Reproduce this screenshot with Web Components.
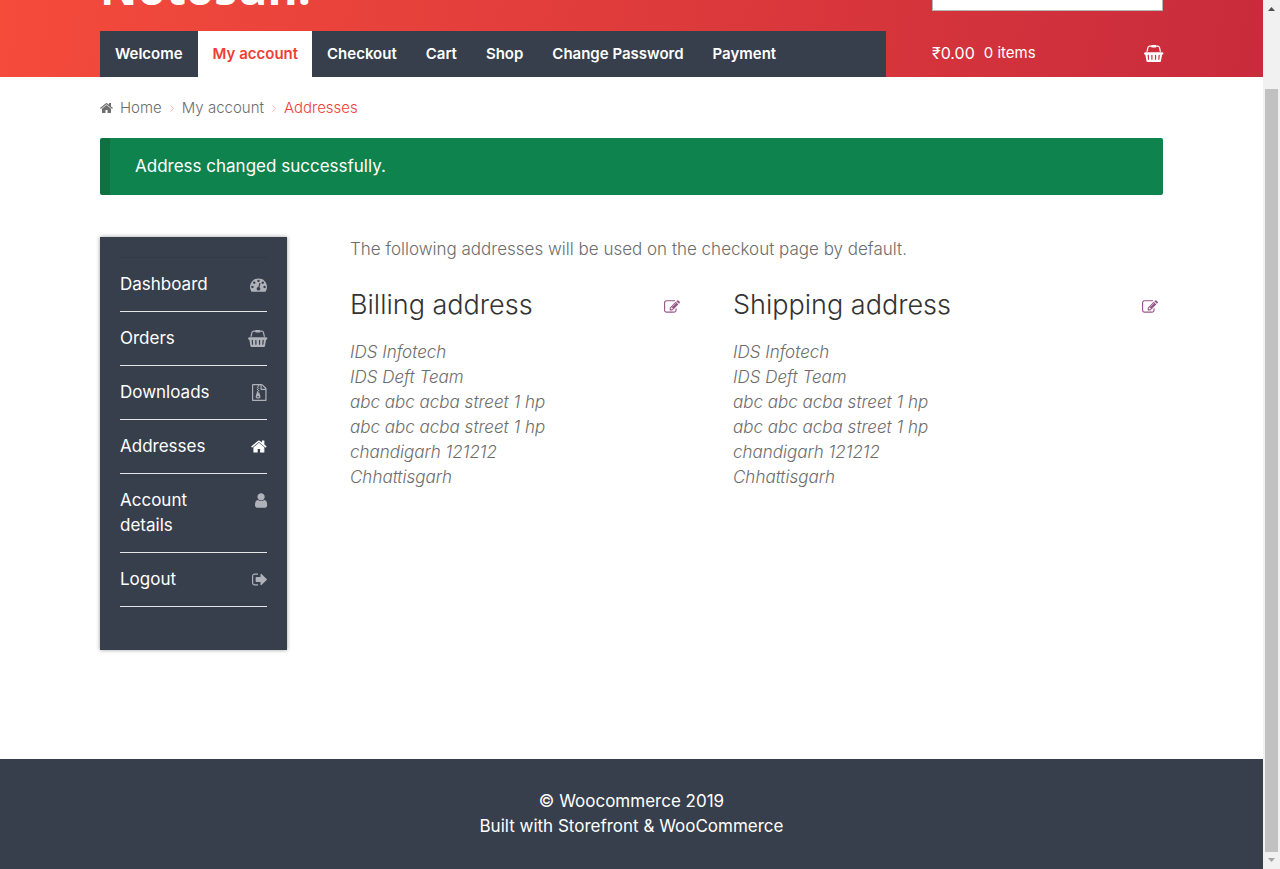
<!DOCTYPE html>
<html lang="en">
<head>
<meta charset="utf-8">
<meta name="viewport" content="width=device-width, initial-scale=1">
<title>Addresses – Woocommerce</title>
<style>
  html, body { margin: 0; height: 100%; }
  body {
    --slate: #373f4d;
    --red: #ef3e36;
    --wrap: 1063px;
    background: #fff;
    color: #6d6d6d;
    font: 300 17px/25px Inter, "Open Sans", sans-serif;
    overflow: hidden;
  }
</style>
</head>
<body>
<shop-page>
  <site-header slot="header"></site-header>
  <crumb-trail></crumb-trail>
  <notice-bar>Address changed successfully.</notice-bar>
  <account-layout>
    <account-nav slot="nav">
      <account-link icon="gauge">Dashboard</account-link>
      <account-link icon="basket">Orders</account-link>
      <account-link icon="archive">Downloads</account-link>
      <account-link icon="home" current>Addresses</account-link>
      <account-link icon="user">Account details</account-link>
      <account-link icon="exit">Logout</account-link>
    </account-nav>
    <address-card heading="Billing address">IDS Infotech<br>IDS Deft Team<br>abc abc acba street 1 hp<br>abc abc acba street 1 hp<br>chandigarh 121212<br>Chhattisgarh</address-card>
    <address-card heading="Shipping address">IDS Infotech<br>IDS Deft Team<br>abc abc acba street 1 hp<br>abc abc acba street 1 hp<br>chandigarh 121212<br>Chhattisgarh</address-card>
  </account-layout>
  <site-footer slot="footer"></site-footer>
</shop-page>

<script>
/* Each icon: left edge of its box, width of its box, path. */
const ICONS = {
  home: [64, 1664, "M1472 992v480q0 26-19 45t-45 19h-384v-384h-256v384h-384q-26 0-45-19t-19-45v-480q0-1 .5-3t.5-3l575-474 575 474q1 2 1 6zm223-69l-62 74q-8 9-21 11h-3q-13 0-21-7l-692-577-692 577q-12 8-24 7-13-2-21-11l-62-74q-8-10-7-23.5t11-21.5l719-599q32-26 76-26t76 26l244 204v-195q0-14 9-23t23-9h192q14 0 23 9t9 23v408l219 182q10 8 11 21.5t-7 23.5z"],
  user: [256, 1280, "M1536 1399q0 109-62.5 187t-150.5 78h-854q-88 0-150.5-78t-62.5-187q0-85 8.5-160.5t31.5-152 58.5-131 94-89 134.5-34.5q131 128 313 128t313-128q76 0 134.5 34.5t94 89 58.5 131 31.5 152 8.5 160.5zm-256-887q0 159-112.5 271.5t-271.5 112.5-271.5-112.5-112.5-271.5 112.5-271.5 271.5-112.5 271.5 112.5 112.5 271.5z"],
  exit: [64, 1600, "M704 1440q0 4 1 20t.5 26.5-3 23.5-10 19.5-20.5 6.5h-320q-119 0-203.5-84.5t-84.5-203.5v-704q0-119 84.5-203.5t203.5-84.5h320q13 0 22.5 9.5t9.5 22.5q0 4 1 20t.5 26.5-3 23.5-10 19.5-20.5 6.5h-320q-66 0-113 47t-47 113v704q0 66 47 113t113 47h312l11.5 1 11.5 3 8 5.5 7 9 2 13.5zm928-544q0 26-19 45l-544 544q-19 19-45 19t-45-19-19-45v-288h-448q-26 0-45-19t-19-45v-384q0-26 19-45t45-19h448v-288q0-26 19-45t45-19 45 19l544 544q19 19 19 45z"],
  edit: [0, 1792, "M888 1184l116-116-152-152-116 116v56h96v96h56zm440-720q-16-16-33 1l-350 350q-17 17-1 33t33-1l350-350q17-17 1-33zm80 594v190q0 119-84.5 203.5t-203.5 84.5h-832q-119 0-203.5-84.5t-84.5-203.5v-832q0-119 84.5-203.5t203.5-84.5h832q63 0 117 25 15 7 18 23 3 17-9 29l-49 49q-14 14-32 8-23-6-45-6h-832q-66 0-113 47t-47 113v832q0 66 47 113t113 47h832q66 0 113-47t47-113v-126q0-13 9-22l64-64q15-15 35-7t20 29zm-96-738l288 288-672 672h-288v-288zm444 132l-92 92-288-288 92-92q28-28 68-28t68 28l152 152q28 28 28 68t-28 68z"],
  gauge: [0, 1792, "M384 1152q0-53-37.5-90.5t-90.5-37.5-90.5 37.5-37.5 90.5 37.5 90.5 90.5 37.5 90.5-37.5 37.5-90.5zm192-448q0-53-37.5-90.5t-90.5-37.5-90.5 37.5-37.5 90.5 37.5 90.5 90.5 37.5 90.5-37.5 37.5-90.5zm428 481l101-382q6-26-7.5-48.5t-38.5-29.5-48 6.5-30 39.5l-101 382q-60 5-107 43.5t-63 98.5q-20 77 20 146t117 89 146-20 89-117q16-60-6-117t-72-91zm660-33q0-53-37.5-90.5t-90.5-37.5-90.5 37.5-37.5 90.5 37.5 90.5 90.5 37.5 90.5-37.5 37.5-90.5zm-640-640q0-53-37.5-90.5t-90.5-37.5-90.5 37.5-37.5 90.5 37.5 90.5 90.5 37.5 90.5-37.5 37.5-90.5zm448 192q0-53-37.5-90.5t-90.5-37.5-90.5 37.5-37.5 90.5 37.5 90.5 90.5 37.5 90.5-37.5 37.5-90.5zm320 448q0 261-141 483-19 29-54 29h-1402q-35 0-54-29-141-221-141-483 0-182 71-348t191-286 286-191 348-71 348 71 286 191 191 286 71 348z"],
  basket: [0, 2048, "M1920 768q53 0 90.5 37.5t37.5 90.5-37.5 90.5-90.5 37.5h-15l-115 662q-8 46-44 76t-82 30h-1280q-46 0-82-30t-44-76l-115-662h-15q-53 0-90.5-37.5t-37.5-90.5 37.5-90.5 90.5-37.5h1792zm-1435 800q26-2 43.5-22.5t15.5-46.5l-32-416q-2-26-22.5-43.5t-46.5-15.5-43.5 22.5-15.5 46.5l32 416q2 25 20.5 42t43.5 17h5zm411-64v-416q0-26-19-45t-45-19-45 19-19 45v416q0 26 19 45t45 19 45-19 19-45zm384 0v-416q0-26-19-45t-45-19-45 19-19 45v416q0 26 19 45t45 19 45-19 19-45zm352 5l32-416q2-26-15.5-46.5t-43.5-22.5-46.5 15.5-22.5 43.5l-32 416q-2 26 15.5 46.5t43.5 22.5h5q25 0 43.5-17t20.5-42zm-1156-1217l-93 412h-132l101-441q19-88 89-143.5t160-55.5h167q0-26 19-45t45-19h384q26 0 45 19t19 45h167q90 0 160 55.5t89 143.5l101 441h-132l-93-412q-11-44-45.5-72t-79.5-28h-167q0 26-19 45t-45 19h-384q-26 0-45-19t-19-45h-167q-45 0-79.5 28t-45.5 72z"],
  archive: [128, 1536, "M768 384v-128h-128v128h128zm128 128v-128h-128v128h128zm-128 128v-128h-128v128h128zm128 128v-128h-128v128h128zm700-388q28 28 48 76t20 88v1152q0 40-28 68t-68 28h-1344q-40 0-68-28t-28-68v-1600q0-40 28-68t68-28h896q40 0 88 20t76 48zm-444-244v376h376q-10-29-22-41l-313-313q-12-12-41-22zm384 1528v-1024h-416q-40 0-68-28t-28-68v-416h-128v128h-128v-128h-512v1536h1280zm-627-721l107 349q8 27 8 52 0 83-72.5 137.5t-183.5 54.5-183.5-54.5-72.5-137.5q0-25 8-52 21-63 120-396v-128h128v128h79q22 0 39 13t23 34zm-141 465q53 0 90.5-19t37.5-45-37.5-45-90.5-19-90.5 19-37.5 45 37.5 45 90.5 19z"]
};

function define(name, render) {
  customElements.define(name, class extends HTMLElement {
    constructor() {
      super();
      this.attachShadow({ mode: "open" });
    }
    connectedCallback() {
      const t = document.createElement("template");
      t.innerHTML = render(this);
      this.shadowRoot.replaceChildren(t.content.cloneNode(true));
    }
  });
}

define("fa-icon", el => {
  const [x, w, d] = ICONS[el.getAttribute("name")];
  return `<style>
    :host { display: inline-flex; flex: none; }
    svg { display: block; height: var(--icon-size, 17px); fill: currentColor; overflow: visible; }
  </style>
  <svg viewBox="${x} 0 ${w} 1792" aria-hidden="true"><path d="${d}"/></svg>`;
});

define("shop-page", () => `<style>
    :host { display: grid; grid-template-columns: minmax(0, 1fr) 17px; height: 100vh; }
    .view { display: flex; flex-direction: column; overflow: hidden; }
    main { box-sizing: border-box; width: 100%; max-width: var(--wrap); margin: 0 auto; flex: 1; }
    .bar { display: flex; flex-direction: column; align-items: center; background: #f1f1f1; }
    .bar svg { width: 17px; height: 17px; flex: none; }
    .thumb { width: 13px; flex: 1; margin-top: 72px; background: #c1c1c1; }
  </style>
  <div class="view">
    <slot name="header"></slot>
    <main><slot></slot></main>
    <slot name="footer"></slot>
  </div>
  <div class="bar" aria-hidden="true">
    <svg viewBox="0 0 17 17"><path d="M5 11h7L8.500 7z" fill="#505050"/></svg>
    <div class="thumb"></div>
    <svg viewBox="0 0 17 17"><path d="M5 6h7L8.500 10z" fill="#a3a3a3"/></svg>
  </div>`);

define("site-header", () => `<style>
    :host { display: block; background: linear-gradient(100deg, #f44b3b, #c92b3c); color: #fff; }
    .wrap { max-width: var(--wrap); margin: 0 auto; display: grid; grid-template-columns: minmax(0, 786fr) minmax(0, 231fr); column-gap: 46px; }
    .top { height: 31px; display: flex; align-items: flex-end; overflow: hidden; }
    .logo { color: inherit; text-decoration: none; font: 700 46px/56px "Open Sans", sans-serif; padding-bottom: 16px; }
    input { box-sizing: border-box; width: 100%; height: 40px; margin-bottom: 20px; border: 1px solid #b5b5b5; background: #fff; border-radius: 0; padding: 0 12px; font: inherit; }
    nav { background: var(--slate); }
    ul { list-style: none; margin: 0; padding: 0; display: flex; }
    li a { display: block; padding: 0 15px; color: #fff; text-decoration: none; font-size: 15px; font-weight: 600; line-height: 46px; white-space: nowrap; }
    li:nth-child(n + 2) a { padding: 0 14px 0 15px; }
    a[aria-current] { background: #fff; color: var(--red); }
    .cart { display: flex; align-items: center; color: #fff; text-decoration: none; font-size: 16px; font-weight: 400; line-height: 44px; height: 44px; }
    .cart small { font-size: 15px; margin-left: 9px; }
    .cart fa-icon { margin-left: auto; }
  </style>
  <div class="wrap">
    <div class="top"><a class="logo" href="#">Notosun!</a></div>
    <div class="top"><input type="search" aria-label="Search products"></div>
    <nav aria-label="Primary"><ul>
      <li><a href="#">Welcome</a></li>
      <li><a href="#" aria-current="page">My account</a></li>
      <li><a href="#">Checkout</a></li>
      <li><a href="#">Cart</a></li>
      <li><a href="#">Shop</a></li>
      <li><a href="#">Change Password</a></li>
      <li><a href="#">Payment</a></li>
    </ul></nav>
    <a class="cart" href="#"><span>₹0.00</span><small>0 items</small><fa-icon name="basket"></fa-icon></a>
  </div>`);

define("crumb-trail", () => `<style>
    :host { display: block; padding: 18px 0 17px; font-size: 15px; line-height: 26px; }
    nav { display: flex; align-items: center; }
    a { color: inherit; text-decoration: none; display: flex; align-items: center; gap: 7px; }
    svg { width: 4px; height: 7px; margin: 0 8px; fill: none; stroke: #f9b9b9; }
    fa-icon { --icon-size: 14px; }
    .here { color: var(--red); }
  </style>
  <nav aria-label="Breadcrumb">
    <a href="#"><fa-icon name="home"></fa-icon>Home</a>
    <svg viewBox="0 0 4 7"><path d="M.500.500l3 3-3 3"/></svg>
    <a href="#">My account</a>
    <svg viewBox="0 0 4 7"><path d="M.500.500l3 3-3 3"/></svg>
    <span class="here">Addresses</span>
  </nav>`);

define("notice-bar", () => `<style>
    :host { display: block; padding: 16px 25px; background: #0f834d; border-left: 10px solid #0f7040; border-radius: 2px; color: #fff; font-weight: 400; margin-bottom: 42px; }
  </style>
  <div role="status"><slot></slot></div>`);

define("account-layout", () => `<style>
    :host { display: grid; grid-template-columns: minmax(0, 187fr) minmax(0, 813fr); column-gap: 63px; align-items: start; }
    p { margin: 0 0 26px; }
    .cards { display: grid; grid-template-columns: minmax(0, 330fr) minmax(0, 425fr); column-gap: 53px; padding-right: 5px; }
  </style>
  <slot name="nav"></slot>
  <section>
    <p>The following addresses will be used on the checkout page by default.</p>
    <div class="cards"><slot></slot></div>
  </section>`);

define("account-nav", () => `<style>
    :host { display: block; background: var(--slate); padding: 20px 20px 43px; box-shadow: 0 0 4px rgba(0, 0, 0, .4); }
    nav { border-top: 1px solid #333a47; }
  </style>
  <nav aria-label="Account"><slot></slot></nav>`);

define("account-link", el => `<style>
    :host { display: block; border-bottom: 1px solid #e6e6e9; }
    a { display: flex; justify-content: space-between; align-items: flex-start; gap: 24px; padding: 14px 0; color: #fff; font-weight: 400; text-decoration: none; }
    fa-icon { width: 18px; padding-top: 4px; justify-content: flex-end; color: ${el.hasAttribute("current") ? "#fff" : "#afb2b8"}; }
  </style>
  <a href="#"${el.hasAttribute("current") ? ' aria-current="page"' : ""}><span><slot></slot></span><fa-icon name="${el.getAttribute("icon")}"></fa-icon></a>`);

define("address-card", el => `<style>
    :host { display: block; }
    header { display: flex; justify-content: space-between; align-items: center; margin-bottom: 18px; }
    h2 { margin: 0; color: #333; font-size: 27px; font-weight: 300; line-height: 34px; }
    a { color: #96588a; display: flex; padding-top: 4px; }
    fa-icon { --icon-size: 16px; }
    address { font-style: italic; }
  </style>
  <header><h2>${el.getAttribute("heading")}</h2><a href="#" aria-label="Edit ${el.getAttribute("heading")}"><fa-icon name="edit"></fa-icon></a></header>
  <address><slot></slot></address>`);

define("site-footer", () => `<style>
    :host { display: block; background: var(--slate); color: #fff; font-weight: 400; text-align: center; padding: 30px 0; }
    a { color: inherit; text-decoration: none; }
  </style>
  <footer>© Woocommerce 2019<br><a href="#">Built with Storefront &amp; WooCommerce</a></footer>`);
</script>
</body>
</html>
